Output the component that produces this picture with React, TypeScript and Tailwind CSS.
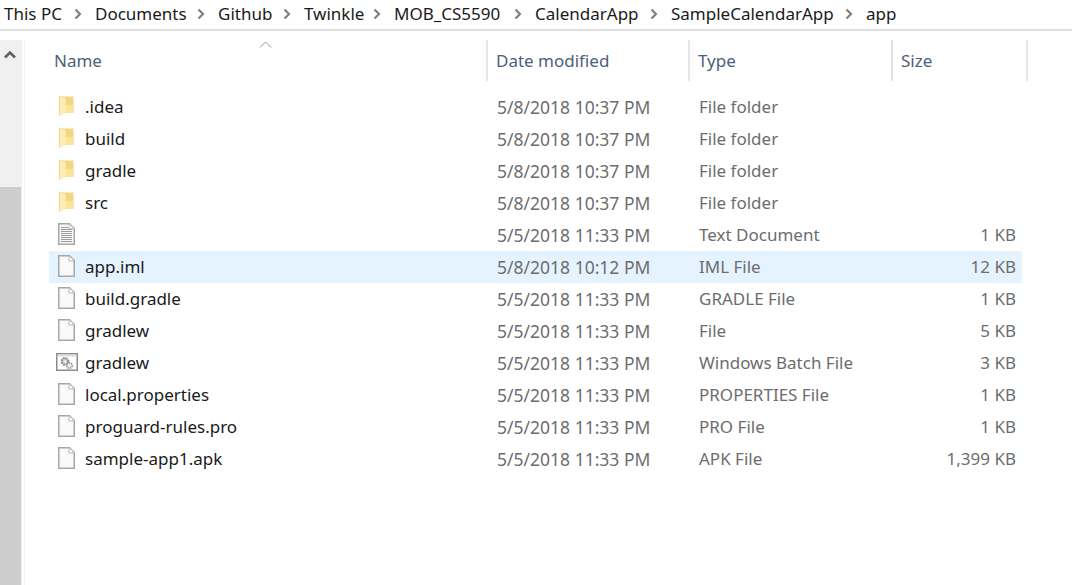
import React from 'react';

type Kind = 'folder' | 'text' | 'file' | 'bat';

interface Row {
  name: string;
  date: string;
  type: string;
  size: string;
  icon: Kind;
  selected?: boolean;
}

const rows: Row[] = [
  { name: '.idea', date: '5/8/2018 10:37 PM', type: 'File folder', size: '', icon: 'folder' },
  { name: 'build', date: '5/8/2018 10:37 PM', type: 'File folder', size: '', icon: 'folder' },
  { name: 'gradle', date: '5/8/2018 10:37 PM', type: 'File folder', size: '', icon: 'folder' },
  { name: 'src', date: '5/8/2018 10:37 PM', type: 'File folder', size: '', icon: 'folder' },
  { name: '', date: '5/5/2018 11:33 PM', type: 'Text Document', size: '1 KB', icon: 'text' },
  { name: 'app.iml', date: '5/8/2018 10:12 PM', type: 'IML File', size: '12 KB', icon: 'file', selected: true },
  { name: 'build.gradle', date: '5/5/2018 11:33 PM', type: 'GRADLE File', size: '1 KB', icon: 'file' },
  { name: 'gradlew', date: '5/5/2018 11:33 PM', type: 'File', size: '5 KB', icon: 'file' },
  { name: 'gradlew', date: '5/5/2018 11:33 PM', type: 'Windows Batch File', size: '3 KB', icon: 'bat' },
  { name: 'local.properties', date: '5/5/2018 11:33 PM', type: 'PROPERTIES File', size: '1 KB', icon: 'file' },
  { name: 'proguard-rules.pro', date: '5/5/2018 11:33 PM', type: 'PRO File', size: '1 KB', icon: 'file' },
  { name: 'sample-app1.apk', date: '5/5/2018 11:33 PM', type: 'APK File', size: '1,399 KB', icon: 'file' },
];

const crumbs = [
  { label: 'This PC', w: 'w-[91px]' },
  { label: 'Documents', w: 'w-[123px]' },
  { label: 'Github', w: 'w-[86px]' },
  { label: 'Twinkle', w: 'w-[90px]' },
  { label: 'MOB_CS5590', w: 'w-[141px]' },
  { label: 'CalendarApp', w: 'w-[136px]' },
  { label: 'SampleCalendarApp', w: 'w-[195px]' },
  { label: 'app', w: 'w-[40px]' },
];

const Chevron = () => (
  <svg width="8" height="12" viewBox="0 0 8 12" className="absolute right-[13px] top-[8px]">
    <path d="M1.5 1.5 L6 6 L1.5 10.5" fill="none" stroke="#808080" strokeWidth="2.2" />
  </svg>
);

const FileIcon = ({ kind }: { kind: Kind }) => {
  if (kind === 'folder') {
    return (
      <svg width="15" height="20" viewBox="0 0 15 20" className="ml-[3px] mb-[2px]">
        <path d="M6 0.5 H14.5 V17 H1 V0 Z" fill="#f5d680" />
        <path d="M6 17 H14.5 V9 H6 Z" fill="#fae39a" />
        <path d="M0.5 0 L6.5 2 V17 L0.5 20 Z" fill="#fdeeb8" />
        <path d="M0 0 V20 L1 19.5 V0.3 Z" fill="#efd88e" />
      </svg>
    );
  }
  if (kind === 'bat') {
    return (
      <svg width="22" height="18" viewBox="0 0 22 18" className="mb-[3px]">
        <rect x="0.75" y="0.75" width="20.5" height="16.5" fill="#fff" stroke="#8c8c8c" strokeWidth="1.5" />
        <rect x="1.5" y="1.5" width="19" height="2" fill="#dcdcdc" />
        <circle cx="9" cy="8.5" r="3.4" fill="#d0d0d0" stroke="#8a8a8a" strokeWidth="2" strokeDasharray="1.8 0.9" />
        <circle cx="9" cy="8.5" r="1" fill="#fff" />
        <circle cx="13.5" cy="12.5" r="2.8" fill="#e8e8e8" stroke="#9a9a9a" strokeWidth="1.6" strokeDasharray="1.6 0.8" />
        <circle cx="13.5" cy="12.5" r="0.8" fill="#fff" />
      </svg>
    );
  }
  return (
    <svg width="17" height="22" viewBox="0 0 17 22" className="ml-[2px] mb-[2px]">
      <path
        d="M0.75 0.75 H11.5 L16.25 5.5 V21.25 H0.75 Z"
        fill={kind === 'text' ? '#f8f8f8' : '#f9f9f9'}
        stroke="#a8a8a8"
        strokeWidth="1.5"
      />
      <path d="M11 1 V6 H16" fill="#fff" stroke="#b5b5b5" />
      {kind === 'text' && (
        <path
          d="M3 4.5 H10 M3 6.5 H14 M3 8.5 H14 M3 10.5 H14 M3 12.5 H14 M3 14.5 H14 M3 16.5 H14 M3 18.5 H14"
          stroke="#9a9a9a"
          strokeWidth="1"
        />
      )}
    </svg>
  );
};

const Header = ({ label, w, pad }: { label: string; w: string; pad: string }) => (
  <div className={`${w} ${pad} h-[41px] flex items-center border-r-2 border-[#e5e5e5] text-[#4c607a]`}>{label}</div>
);

export default function App() {
  return (
    <div className="w-[1072px] h-[585px] bg-white overflow-hidden text-[17px] leading-[26px] font-['Noto_Sans','Open_Sans',sans-serif] text-[#1a1a1a]">
      <div className="h-[31px] flex items-center pl-1 border-b-2 border-[#e0e0e0]">
        {crumbs.map((c, i) => (
          <div key={c.label} className={`${c.w} relative shrink-0 h-[30px] leading-[28px]`}>
            {c.label}
            {i < crumbs.length - 1 && <Chevron />}
          </div>
        ))}
      </div>
      <div className="flex h-[554px]">
        <div className="w-[22px] mt-[9px] flex flex-col bg-[#f0f0f0] shrink-0">
          <div className="h-[147px] pt-[10px] pl-[4px]">
            <svg width="12" height="9" viewBox="0 0 12 9" className="block">
              <path d="M1 7.5 L6 2.5 L11 7.5" fill="none" stroke="#606060" strokeWidth="2.6" />
            </svg>
          </div>
          <div className="flex-1 w-[21px] bg-[#cdcdcd]" />
        </div>
        <div className="w-[2px] shrink-0" />
        <div className="w-[1px] mt-[9px] bg-[#f3f3f3] shrink-0" />
        <div className="flex-1 min-w-0">
          <div className="relative flex h-[41px] mt-[9px] pl-[24px]">
            <div className="absolute left-[234px] top-[1px]">
              <svg width="13" height="8" viewBox="0 0 13 8" className="block">
                <path d="M1 6.5 L6.5 1 L12 6.5" fill="none" stroke="#9a9a9a" strokeWidth="1" />
              </svg>
            </div>
            <Header label="Name" w="w-[439px]" pad="pl-[5px]" />
            <Header label="Date modified" w="w-[202px]" pad="pl-[8px]" />
            <Header label="Type" w="w-[203px]" pad="pl-[8px]" />
            <Header label="Size" w="w-[135px]" pad="pl-[8px]" />
          </div>
          <div className="mt-[10px] ml-[24px] w-[973px]">
            {rows.map((r, i) => (
              <div key={i} className={`flex h-8 items-center ${r.selected ? 'bg-[#e5f3ff]' : ''}`}>
                <div className="w-[448px] flex items-center shrink-0">
                  <div className="w-[36px] pl-[7px] h-[24px] flex items-center shrink-0">
                    <FileIcon kind={r.icon} />
                  </div>
                  <span>{r.name}</span>
                </div>
                <div className="w-[202px] shrink-0 text-[17.5px] leading-[26px] text-[#6d6d6d]">{r.date}</div>
                <div className="w-[200px] shrink-0 text-[#6d6d6d]">{r.type}</div>
                <div className="w-[117px] shrink-0 text-right text-[#6d6d6d]">{r.size}</div>
              </div>
            ))}
          </div>
        </div>
      </div>
    </div>
  );
}
